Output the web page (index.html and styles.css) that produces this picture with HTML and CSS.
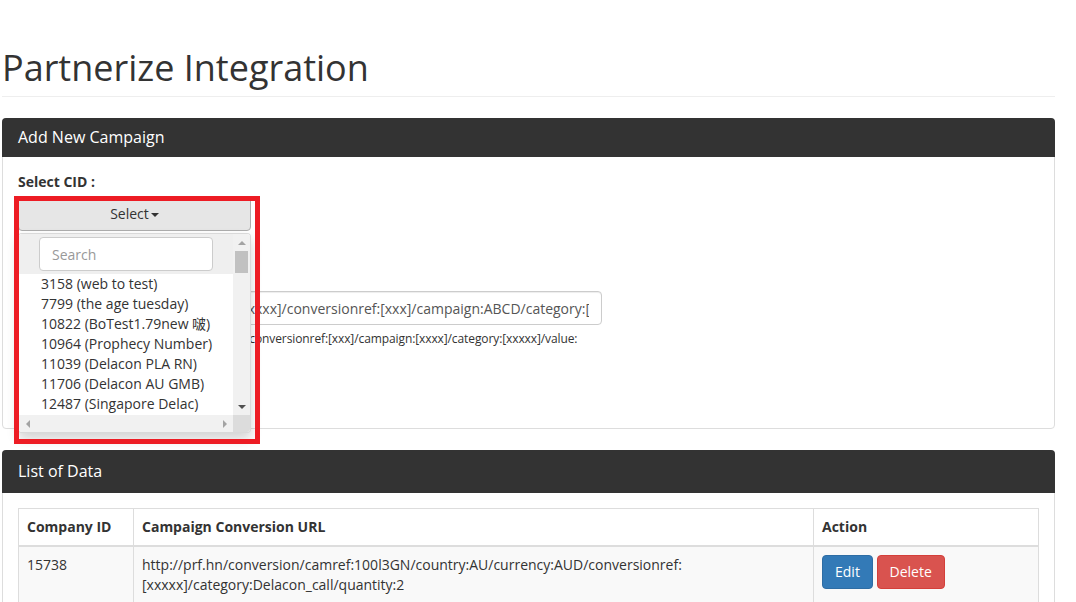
FILE: index.html
```html
<!DOCTYPE html>
<html lang="en">
<head>
    <meta charset="UTF-8">
    <title>Partnerize Integration</title>
    <link rel="stylesheet" href="styles.css">
</head>
<body>
<div class="page">
    <div class="page-header">
        <h1>Partnerize Integration</h1>
    </div>

    <div class="panel">
        <div class="panel-heading">Add New Campaign</div>
        <div class="panel-body">
            <div class="form-group cid-group">
                <label>Select CID :</label>
                <div class="cid-picker">
                    <button class="btn btn-select">Select<span class="caret"></span></button>
                    <div class="cid-menu">
                        <div class="cid-scroll">
                            <div class="cid-search">
                                <input type="text" placeholder="Search">
                            </div>
                            <ul class="cid-list">
                                <li>3158 (web to test)</li>
                                <li>7799 (the age tuesday)</li>
                                <li>10822 (BoTest1.79new 啵)</li>
                                <li>10964 (Prophecy Number)</li>
                                <li>11039 (Delacon PLA RN)</li>
                                <li>11706 (Delacon AU GMB)</li>
                                <li>12487 (Singapore Delac)</li>
                                <li>13021 (Delacon NZ)</li>
                                <li>15738 (Delacon Call Tracking)</li>
                            </ul>
                        </div>
                        <div class="vbar">
                            <span class="arrow arrow-up"></span>
                            <span class="thumb"></span>
                            <span class="arrow arrow-down"></span>
                        </div>
                        <div class="hbar">
                            <span class="arrow arrow-left"></span>
                            <span class="arrow arrow-right"></span>
                        </div>
                        <div class="corner"></div>
                    </div>
                    <div class="highlight"></div>
                </div>
            </div>

            <div class="form-group">
                <label>Campaign Conversion URL :</label>
                <input class="form-control" type="text" value="http://prf.hn/conversion/camref:[xxxx]/conversionref:[xxx]/campaign:ABCD/category:[xxxx]/value:[xxx]">
                <p class="help">e.g. http://prf.hn/conversion/camref:[xxx]/conversionref:[xxx]/campaign:[xxxx]/category:[xxxxx]/value:<br>[xxx]/quantity:[x]</p>
            </div>

            <button class="btn btn-primary">Save</button>
        </div>
    </div>

    <div class="panel">
        <div class="panel-heading tall">List of Data</div>
        <div class="panel-body">
            <table class="data-table">
                <thead>
                <tr>
                    <th class="col-id">Company ID</th>
                    <th class="col-url">Campaign Conversion URL</th>
                    <th>Action</th>
                </tr>
                </thead>
                <tbody>
                <tr>
                    <td>15738</td>
                    <td>http://prf.hn/conversion/camref:100l3GN/country:AU/currency:AUD/conversionref:<br>[xxxxx]/category:Delacon_call/quantity:2</td>
                    <td>
                        <button class="btn btn-primary">Edit</button>
                        <button class="btn btn-danger">Delete</button>
                    </td>
                </tr>
                <tr>
                    <td>15740</td>
                    <td>http://prf.hn/conversion/camref:100l3GN/country:AU/currency:AUD/conversionref:<br>[xxxxx]/category:Delacon_form/quantity:1</td>
                    <td>
                        <button class="btn btn-primary">Edit</button>
                        <button class="btn btn-danger">Delete</button>
                    </td>
                </tr>
                </tbody>
            </table>
        </div>
    </div>
</div>
</body>
</html>
```

FILE: styles.css
```css
*{
    box-sizing: border-box;
}
html, body{
    overflow: hidden;
}
body{
    margin: 0;
    padding: 0 21px 0 2px;
    font-family: "Open Sans", "Noto Sans CJK SC", sans-serif;
    font-size: 14px;
    line-height: 20px;
    color: #333;
    background: #fff;
}
ul{
    margin: 0;
    padding: 0;
    list-style: none;
}

/* header */
.page-header{
    padding: 48px 0 8px;
    border-bottom: 1px solid #eee;
    margin-bottom: 21px;
}
.page-header h1{
    margin: 0;
    font-size: 36px;
    font-weight: 400;
    line-height: 40px;
}

/* panels */
.panel{
    border: 1px solid #ddd;
    border-radius: 4px;
    margin-bottom: 21px;
    background: #fff;
}
.panel-heading{
    margin: -1px -1px 0;
    padding: 11px 16px;
    background: #333;
    color: #fff;
    font-size: 16px;
    line-height: 17px;
    border-radius: 4px 4px 0 0;
}
.panel-heading.tall{
    padding: 13px 16px;
}
.panel-body{
    padding: 15px;
}

/* form */
label{
    display: block;
    font-weight: 700;
    margin-bottom: 5px;
}
.form-group{
    margin-bottom: 15px;
}
.cid-group{
    margin-bottom: 35px;
}
.form-control{
    display: block;
    width: 584px;
    height: 34px;
    padding: 6px 12px;
    border: 1px solid #ccc;
    border-radius: 4px;
    font: inherit;
    color: #555;
    box-shadow: inset 0 1px 1px rgba(0,0,0,.075);
}
.help{
    margin: 5px 0 0;
    font-size: 12px;
    line-height: 17px;
    letter-spacing: -0.1px;
}

/* buttons */
.btn{
    display: inline-block;
    padding: 6px 12px;
    border: 1px solid transparent;
    border-radius: 4px;
    font: inherit;
    line-height: 20px;
    color: #fff;
    cursor: pointer;
}
.btn-primary{
    background: #337ab7;
    border-color: #2e6da4;
}
.btn-danger{
    background: #d9534f;
    border-color: #d43f3a;
}

/* cid dropdown */
.cid-picker{
    position: relative;
    width: 233px;
}
.btn-select{
    display: block;
    width: 100%;
    color: #333;
    background: #e6e6e6;
    border-color: #adadad;
    text-align: center;
}
.caret{
    display: inline-block;
    width: 0;
    height: 0;
    margin-left: 2px;
    vertical-align: middle;
    border-top: 4px solid #333;
    border-left: 4px solid transparent;
    border-right: 4px solid transparent;
}
.cid-menu{
    position: absolute;
    top: 100%;
    left: 0;
    z-index: 10;
    width: 233px;
    height: 200px;
    margin-top: 2px;
    display: grid;
    grid-template-columns: 1fr 17px;
    grid-template-rows: 1fr 17px;
    background: #fff;
    border: 1px solid rgba(0,0,0,.15);
    border-radius: 4px;
    box-shadow: 0 6px 12px rgba(0,0,0,.175);
    overflow: hidden;
}
.cid-scroll{
    overflow: hidden;
    background: #fff;
}
.cid-search{
    padding: 3px 20px;
    background: #efefef;
}
.cid-search input{
    display: block;
    width: 100%;
    height: 34px;
    padding: 6px 12px;
    border: 1px solid #ccc;
    border-radius: 4px;
    font: inherit;
    color: #555;
}
.cid-search input::placeholder{
    color: #999;
}
.cid-list li{
    padding: 0 22px;
    white-space: nowrap;
    line-height: 20px;
}
.vbar, .hbar{
    display: flex;
    justify-content: space-between;
    align-items: center;
    background: #f1f1f1;
}
.vbar{
    flex-direction: column;
}
.corner{
    background: #dcdcdc;
}
.arrow{
    width: 17px;
    height: 17px;
    display: flex;
    align-items: center;
    justify-content: center;
}
.arrow::before{
    content: "";
    border: 4px solid transparent;
}
.arrow-up::before{
    border-bottom-color: #a3a3a3;
    border-top-width: 0;
}
.arrow-down::before{
    border-top-color: #505050;
    border-bottom-width: 0;
}
.arrow-left::before{
    border-right-color: #a3a3a3;
    border-left-width: 0;
}
.arrow-right::before{
    border-left-color: #a3a3a3;
    border-right-width: 0;
}
.vbar .thumb{
    width: 13px;
    height: 22px;
    background: #c1c1c1;
    margin-bottom: auto;
}
.highlight{
    position: absolute;
    left: -4px;
    top: -1px;
    width: 246px;
    height: 248px;
    border: 5px solid #ed1c24;
    z-index: 20;
    pointer-events: none;
}

/* table */
.data-table{
    width: 100%;
    border-collapse: collapse;
    border: 1px solid #ddd;
}
.data-table th, .data-table td{
    padding: 8px;
    border: 1px solid #ddd;
    text-align: left;
    vertical-align: top;
    line-height: 20px;
}
.data-table thead th{
    border-bottom-width: 2px;
}
.data-table tbody tr:nth-child(odd){
    background: #f9f9f9;
}
.data-table .col-id{
    width: 115px;
}
.data-table .col-url{
    width: 680px;
}
```
